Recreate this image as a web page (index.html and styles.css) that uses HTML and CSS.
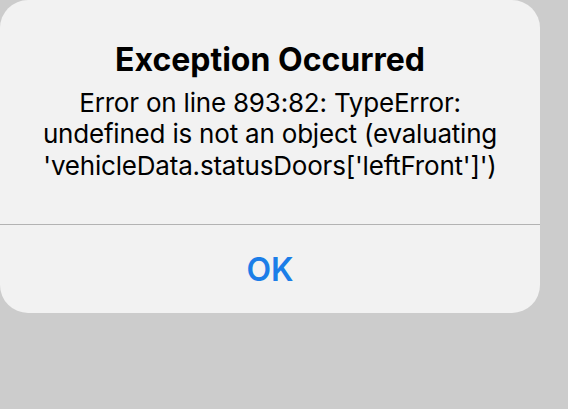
FILE: index.html
```html
<!DOCTYPE html>
<html lang="en">
  <head>
    <meta charset="UTF-8" />
    <meta name="viewport" content="width=device-width, initial-scale=1.0" />
    <title>Exception Occurred</title>
    <link rel="stylesheet" href="styles.css">
  </head>
  <body>
    <div class="alert">
      <div class="alert-body">
        <h1 class="alert-title">Exception Occurred</h1>
        <p class="alert-message">Error on line 893:82: TypeError:<br>undefined is not an object (evaluating<br>'vehicleData.statusDoors['leftFront']')</p>
      </div>
      <button class="alert-button" type="button">OK</button>
    </div>
  </body>
</html>
```

FILE: styles.css
```css
* {
    margin: 0;
    padding: 0;
    box-sizing: border-box;
}
body {
    font-family: Inter, "Noto Sans", sans-serif;
    background-color: #cccccc;
    width: 568px;
    height: 409px;
    overflow: hidden;
}
/* La alerta ocupa la parte superior izquierda */
.alert {
    width: 540px;
    height: 313px;
    background-color: #f2f2f2;
    border-radius: 28px;
    display: flex;
    flex-direction: column;
    overflow: hidden;
}
.alert-body {
    height: 225px;
    padding-top: 41px;
    text-align: center;
    border-bottom: 1px solid #b3b3b3;
    color: #000000;
}
.alert-title {
    font-size: 32px;
    font-weight: 700;
    line-height: 38px;
}
.alert-message {
    margin-top: 7.5px;
    font-size: 26px;
    line-height: 31.7px;
    letter-spacing: -0.2px;
}
.alert-button {
    flex: 1;
    display: flex;
    align-items: center;
    justify-content: center;
    background: none;
    border: none;
    font-family: inherit;
    font-size: 32px;
    font-weight: 600;
    color: #1b7ee8;
}
```
